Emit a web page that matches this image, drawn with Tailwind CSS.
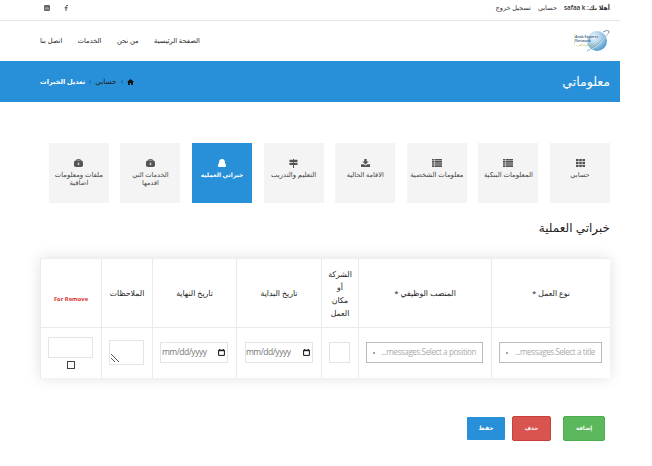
<!DOCTYPE html>
<html lang="ar" dir="rtl">
<head>
<meta charset="utf-8">
<title>معلوماتي</title>
<script src="https://cdn.jsdelivr.net/npm/@tailwindcss/browser@4"></script>
</head>
<body class="bg-white overflow-hidden">
<div dir="ltr" class="w-[652px] h-[466px] overflow-hidden font-['Open_Sans','DejaVu_Sans',sans-serif] text-[#333]">
<div class="w-[620px]">
  <div class="h-[21px] border-b border-[#e6e6e6] pl-10 pr-[10px] flex justify-between">
    <div class="flex gap-[15px] pt-[5px] pl-1 text-[#444]">
      <svg class="w-[6px] h-[6px]" viewBox="0 0 6 6"><rect width="6" height="6" rx="1" fill="#666"/><path d="M1.5 2.5v2M3 4.500v-2M3 3q1.500-1 1.500 1.500" stroke="#ccc" stroke-width=".7" fill="none"/></svg>
      <svg class="w-[4px] h-[6px] -ml-px" viewBox="0 0 4 6"><path d="M4 .5H3Q2 .5 2 1.500V6M.5 2.800H3.700" stroke="#555" stroke-width="1" fill="none"/></svg>
    </div>
    <div dir="rtl" class="flex gap-[7px] text-[6.5px] leading-[16px] whitespace-nowrap">
      <span class="font-semibold text-[6.300px]">أهلا بك: safaa k</span><span>حسابي</span><span>تسجيل خروج</span>
    </div>
  </div>
  <div class="h-10 pl-10 pr-[10px] flex justify-between">
    <nav dir="rtl" class="flex gap-[15.500px] text-[6.700px] leading-[40px] whitespace-nowrap text-[#222]">
      <span>الصفحة الرئيسية</span><span>من نحن</span><span>الخدمات</span><span>اتصل بنا</span>
    </nav>
    <svg class="w-9 h-6 mt-2" viewBox="0 0 36 24">
      <defs><radialGradient id="g" cx=".35" cy=".3" r=".8"><stop offset="0" stop-color="#eef6fb"/><stop offset=".55" stop-color="#9cc8e6"/><stop offset="1" stop-color="#3d8cc2"/></radialGradient></defs>
      <circle cx="23" cy="12" r="10" fill="url(#g)"/>
      <path d="M13 22C22 18 31 10 35 3Q35 0 29 3" fill="none" stroke="#6d94b8" stroke-width="1"/>
      <path d="M14 22C23 18 30 11 34 4" fill="none" stroke="#fff" stroke-width=".6"/>
      <path d="M.5 5v11" stroke="#c9d5a5" stroke-width=".6"/>
      <g direction="ltr"><text x="1" y="8.500" font-size="4.300" font-weight="600" fill="#36567b" textLength="23" lengthAdjust="spacingAndGlyphs">Arab Experts</text>
      <text x="1" y="12.800" font-size="4" font-weight="600" fill="#36567b" textLength="16" lengthAdjust="spacingAndGlyphs">Network</text></g>
      <text x="12" y="16.500" font-size="3.200" fill="#a9b73f" text-anchor="middle" textLength="20" lengthAdjust="spacingAndGlyphs">شبكة الخبراء العرب</text>
    </svg>
  </div>
  <div class="h-[41px] bg-[#2790d9] pl-10 pr-[10px] flex items-center justify-between">
    <div dir="rtl" class="flex items-center gap-[4px] text-[7.300px] whitespace-nowrap text-[#222]">
      <svg class="w-[7px] h-[6px]" viewBox="0 0 7 6"><path d="M3.500 0 7 3H6v3H4.200V4H2.800v2H1V3H0Z" fill="#111"/></svg>
      <svg class="w-[2px] h-[4px]" viewBox="0 0 2 4"><path d="M1.700 .3 .5 2l1.200 1.700" stroke="#17517f" stroke-width=".7" fill="none"/></svg>
      <span>حسابي</span>
      <svg class="w-[2px] h-[4px]" viewBox="0 0 2 4"><path d="M1.700 .3 .5 2l1.200 1.700" stroke="#17517f" stroke-width=".7" fill="none"/></svg>
      <span class="font-bold text-white text-[6.600px]">تعديل الخبرات</span>
    </div>
    <h1 dir="rtl" class="text-white text-[12.500px] pt-[2px]">معلوماتي</h1>
  </div>

  <div dir="rtl" class="mt-[41px] mr-[10px] flex gap-[11.600px] text-[6.600px] leading-[8px] text-center text-[#444]">
    <div class="w-[60px] h-[60px] shrink-0 bg-[#f4f4f4] pt-4 flex flex-col items-center gap-[4px]"><svg class="w-[9px] h-[8px]" viewBox="0 0 9 8" fill="#555"><path d="M0 0h2.600v2.200H0zM3.200 0h2.600v2.200H3.200zM6.400 0H9v2.200H6.400zM0 2.900h2.600v2.200H0zM3.200 2.900h2.600v2.200H3.200zM6.400 2.900H9v2.200H6.400zM0 5.800h2.600V8H0zM3.200 5.800h2.600V8H3.200zM6.400 5.800H9V8H6.400z"/></svg><span>حسابي</span></div>
    <div class="w-[60px] h-[60px] shrink-0 bg-[#f4f4f4] pt-4 flex flex-col items-center gap-[4px]"><svg class="w-[10px] h-[8px]" viewBox="0 0 10 8" fill="#555"><path d="M0 0h2v1.600H0zM2.500 0H10v1.600H2.500zM0 2.100h2v1.600H0zM2.500 2.100H10v1.600H2.500zM0 4.200h2v1.600H0zM2.500 4.200H10v1.600H2.500zM0 6.300h2v1.600H0zM2.500 6.300H10v1.600H2.500z"/></svg><span class="whitespace-nowrap text-[6.900px]">المعلومات البنكية</span></div>
    <div class="w-[60px] h-[60px] shrink-0 bg-[#f4f4f4] pt-4 flex flex-col items-center gap-[4px]"><svg class="w-[10px] h-[8px]" viewBox="0 0 10 8" fill="#555"><path d="M0 0h2v1.600H0zM2.500 0H10v1.600H2.500zM0 2.100h2v1.600H0zM2.500 2.100H10v1.600H2.500zM0 4.200h2v1.600H0zM2.500 4.200H10v1.600H2.500zM0 6.300h2v1.600H0zM2.500 6.300H10v1.600H2.500z"/></svg><span class="whitespace-nowrap text-[6.900px]">معلومات الشخصية</span></div>
    <div class="w-[60px] h-[60px] shrink-0 bg-[#f4f4f4] pt-4 flex flex-col items-center gap-[4px]"><svg class="w-[9px] h-[8px]" viewBox="0 0 9 8" fill="#555"><path d="M3.300 0h2.400v2.500h2L4.500 5.600 1.300 2.500h2zM0 5.200h2.700l1.800 1.300 1.800-1.300H9V8H0z"/></svg><span class="whitespace-nowrap">الاقامة الحالية</span></div>
    <div class="w-[60px] h-[60px] shrink-0 bg-[#f4f4f4] pt-4 flex flex-col items-center gap-[4px]"><svg class="w-[9px] h-[9px] -mb-px" viewBox="0 0 9 9" fill="#555"><path d="M4 0h1v.8h3L9 1.900 8 3H5v.8h3.500V6H5v3H4V6H1L0 4.900l1-1.100h3V3H.5V.8H4z"/></svg><span class="whitespace-nowrap text-[6.900px]">التعليم والتدريب</span></div>
    <div class="w-[60px] h-[60px] shrink-0 bg-[#2790d9] text-white font-bold pt-4 flex flex-col items-center gap-[4px]"><svg class="w-[8px] h-[8px]" viewBox="0 0 8 8" fill="#fff"><path d="M4 0C5.800 0 6.900 1 6.900 2.900 6.900 4.200 8 5 8 7.300Q8 8 7 8H1Q0 8 0 7.300C0 5 1.100 4.200 1.100 2.900 1.100 1 2.200 0 4 0"/></svg><span class="whitespace-nowrap text-[6px]">خبراتي العملية</span></div>
    <div class="w-[60px] h-[60px] shrink-0 bg-[#f4f4f4] pt-4 flex flex-col items-center gap-[4px]"><svg class="w-[9px] h-[8px]" viewBox="0 0 9 8"><path d="M2.700 2V.7h3.600V2" stroke="#555" fill="none"/><rect y="1.600" width="9" height="6.400" rx="1.800" fill="#555"/><path d="M4.500 3.400v3M3.200 4.900h2.600" stroke="#ccc" stroke-width=".8"/></svg><span>الخدمات التي<br>اقدمها</span></div>
    <div class="w-[60px] h-[60px] shrink-0 bg-[#f4f4f4] pt-4 flex flex-col items-center gap-[4px]"><svg class="w-[9px] h-[8px]" viewBox="0 0 9 8"><path d="M2.700 2V.7h3.600V2" stroke="#555" fill="none"/><rect y="1.600" width="9" height="6.400" rx="1.800" fill="#555"/><path d="M4.500 3.400v3M3.200 4.900h2.600" stroke="#ccc" stroke-width=".8"/></svg><span class="whitespace-nowrap text-[6.900px]">ملفات ومعلومات<br>اضافية</span></div>
  </div>

  <h2 dir="rtl" class="mt-[15px] h-5 mr-[10px] text-[12px] leading-5 text-[#222]">خبراتي العملية</h2>

  <div dir="rtl" class="ml-10 mt-5 w-[570px] h-[120px] grid grid-cols-[119px_133px_37px_85px_84px_51px_61px] grid-rows-[69px_50px] text-center text-[7.800px] text-[#222] shadow-[0_0_14px_rgba(0,0,0,0.12)] bg-white border-t border-[#eee]">
    <div class="border-l border-b border-[#eaeaea] pt-[2px] flex items-center justify-center">نوع العمل *</div>
    <div class="border-l border-b border-[#eaeaea] pt-[2px] flex items-center justify-center">المنصب الوظيفي *</div>
    <div class="border-l border-b border-[#eaeaea] pt-[2px] flex items-center justify-center leading-[13px] whitespace-nowrap">الشركة<br>أو<br>مكان<br>العمل</div>
    <div class="border-l border-b border-[#eaeaea] pt-[2px] flex items-center justify-center whitespace-nowrap">تاريخ البداية</div>
    <div class="border-l border-b border-[#eaeaea] pt-[2px] flex items-center justify-center whitespace-nowrap">تاريخ النهاية</div>
    <div class="border-l border-b border-[#eaeaea] pt-[2px] flex items-center justify-center whitespace-nowrap">الملاحظات</div>
    <div class="border-l border-b border-[#eaeaea] flex items-center justify-center pt-3 text-[5.800px] font-bold text-[#d93030]">For Remove</div>

    <div class="border-l border-[#eaeaea] px-2 pl-[7px] pt-[14px]"><div dir="ltr" class="h-[21px] border border-[#bbb] px-[6px] flex items-center justify-between text-[8.100px] tracking-[-0.420px] text-[#aaa]"><i class="w-[2px] h-[2px] rounded-full bg-[#888]"></i><span>...messages.Select a title</span></div></div>
    <div class="border-l border-[#eaeaea] px-2 pl-[7px] pt-[14px]"><div dir="ltr" class="h-[21px] border border-[#bbb] px-[6px] flex items-center justify-between text-[8.100px] tracking-[-0.420px] text-[#aaa]"><i class="w-[2px] h-[2px] rounded-full bg-[#888]"></i><span>...messages.Select a position</span></div></div>
    <div class="border-l border-[#eaeaea] pl-[7px] pr-2 pt-[14px]"><div class="h-[21px] border border-[#e4e4e4]"></div></div>
    <div class="border-l border-[#eaeaea] px-2 pt-[14px]"><div dir="ltr" class="h-[21px] border border-[#e4e4e4] pr-[2px] flex items-center justify-between text-[8.500px] tracking-[-0.500px] text-[#777]"><span>mm/dd/yyyy</span><svg class="w-[7px] h-[7px]" viewBox="0 0 7 7"><path d="M.6 1.200h5.800v5.200H.6zM.6 1.700h5.800M1.700 0v1.500M5.300 0v1.500" stroke="#111" fill="none"/></svg></div></div>
    <div class="border-l border-[#eaeaea] pl-[7px] pr-2 pt-[14px]"><div dir="ltr" class="h-[21px] border border-[#e4e4e4] pl-px pr-[2px] flex items-center justify-between text-[8.500px] tracking-[-0.500px] text-[#777]"><span>mm/dd/yyyy</span><svg class="w-[7px] h-[7px]" viewBox="0 0 7 7"><path d="M.6 1.200h5.800v5.200H.6zM.6 1.700h5.800M1.700 0v1.500M5.300 0v1.500" stroke="#111" fill="none"/></svg></div></div>
    <div class="border-l border-[#eaeaea] pl-[7px] pr-2 pt-3"><div dir="ltr" class="h-[25px] border border-[#e4e4e4] flex items-end pl-px pb-px"><svg class="w-[9px] h-[9px]" viewBox="0 0 9 9"><path d="M0 0l8 8M0 4l4 4" stroke="#444" stroke-width=".9"/></svg></div></div>
    <div class="border-l border-[#eaeaea] pl-2 pr-[9px] pt-[9px] flex flex-col items-center gap-[3px]"><div class="h-[21px] w-[45px] border border-[#e4e4e4]"></div><div class="w-2 h-2 border border-[#444]"></div></div>
  </div>

  <div dir="rtl" class="mt-[38px] mr-[15px] flex items-center text-[6px] font-bold text-white text-center">
    <div class="w-[42px] h-[25px] rounded-[2px] bg-[#5cb85c] border border-[#4cae4c] leading-[23px] text-[5.500px]">إضافة</div>
    <div class="mr-3 w-[39px] h-[25px] rounded-[2px] bg-[#d9534f] border border-[#c9413c] leading-[23px] text-[5.500px]">حذف</div>
    <div class="mr-[7px] w-[38px] h-[23px] rounded-[1px] bg-[#2790d9] leading-[23px]">حفظ</div>
  </div>
</div>
</div>
</body>
</html>
